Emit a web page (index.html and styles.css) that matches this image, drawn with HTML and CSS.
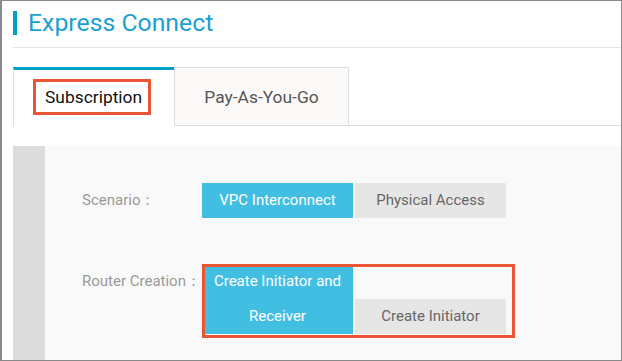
FILE: index.html
```html
<!DOCTYPE html>
<html>
<head>
    <title>Express Connect</title>
    <link rel="stylesheet" href="styles.css">
</head>
<body>
    <div class="page">
        <div class="page-header">
            <span class="title-bar"></span>
            <h1 class="page-title">Express Connect</h1>
        </div>

        <div class="tabs">
            <div class="tab active">
                <span class="tab-label marked">Subscription</span>
            </div>
            <div class="tab">
                <span class="tab-label">Pay-As-You-Go</span>
            </div>
            <div class="tab-rest"></div>
        </div>

        <div class="panel">
            <div class="panel-side"></div>
            <div class="panel-body">
                <div class="form-row">
                    <span class="form-label">Scenario：</span>
                    <div class="options">
                        <button class="option selected">VPC Interconnect</button>
                        <button class="option">Physical Access</button>
                    </div>
                </div>
                <div class="form-row">
                    <span class="form-label">Router Creation：</span>
                    <div class="options marked-group">
                        <button class="option selected tall">Create Initiator and<br>Receiver</button>
                        <button class="option bottom">Create Initiator</button>
                    </div>
                </div>
            </div>
        </div>
    </div>
</body>
</html>
```

FILE: styles.css
```css
body {
    margin: 0;
    font-family: Roboto, "Liberation Sans", sans-serif;
    background-color: white;
}
.page {
    height: 361px;
    box-sizing: border-box;
    border: 1px solid #8a8a8a;
    border-left-width: 2px;
    padding-left: 11px;
    display: flex;
    flex-direction: column;
    overflow: hidden;
}
.page-header {
    display: flex;
    align-items: flex-start;
    height: 36px;
    padding-top: 10px;
    border-bottom: 1px solid #e5e5e5;
}
.title-bar {
    width: 4px;
    height: 24px;
    background-color: #00a2ca;
    margin-right: 11px;
}
.page-title {
    margin: 0;
    font-size: 24.8px;
    font-weight: normal;
    line-height: 24px;
    color: #1c9fd3;
}
.tabs {
    display: flex;
    height: 59px;
    margin-top: 19px;
}
.tab {
    width: 175px;
    box-sizing: border-box;
    border: 1px solid #dddddd;
    background-color: #fbfaf8;
    display: flex;
    align-items: center;
    justify-content: center;
}
.tab.active {
    width: 161px;
    border-top: 3px solid #00a2ca;
    border-right: none;
    border-bottom: none;
    background-color: white;
    justify-content: flex-start;
    padding-left: 19px;
    padding-bottom: 2px;
}
.tab-label {
    font-size: 17.4px;
    line-height: 30px;
    color: #555;
}
.tab-label.marked {
    color: #111;
    border: 3px solid #ea5534;
    padding: 0 6px 0 9px;
}
.tab-rest {
    flex: 1;
    border-bottom: 1px solid #dddddd;
}
.panel {
    flex: 1;
    display: flex;
    margin-top: 20px;
}
.panel-side {
    width: 32px;
    background-color: #dcdcdc;
}
.panel-body {
    flex: 1;
    background-color: #f9f9f9;
    padding: 37px 0 0 37px;
    display: flex;
    flex-direction: column;
    gap: 46px;
}
.form-row {
    display: flex;
    align-items: flex-start;
}
.form-label {
    width: 120px;
    font-size: 15px;
    line-height: 35px;
    color: #999;
}
.options {
    display: flex;
    gap: 2px;
}
.option {
    width: 151px;
    height: 35px;
    border: none;
    padding: 0;
    background-color: #e6e6e6;
    color: #666;
    font-family: Roboto, "Liberation Sans", sans-serif;
    font-size: 15px;
    line-height: 35px;
}
.option.selected {
    background-color: #43bee3;
    color: white;
}
.option.tall {
    height: 70px;
}
.option.bottom {
    align-self: flex-end;
}
.marked-group {
    position: relative;
}
.marked-group::after {
    content: "";
    position: absolute;
    top: 0;
    left: 0;
    right: -9px;
    bottom: -4px;
    border: 3px solid #ea5534;
}
```
